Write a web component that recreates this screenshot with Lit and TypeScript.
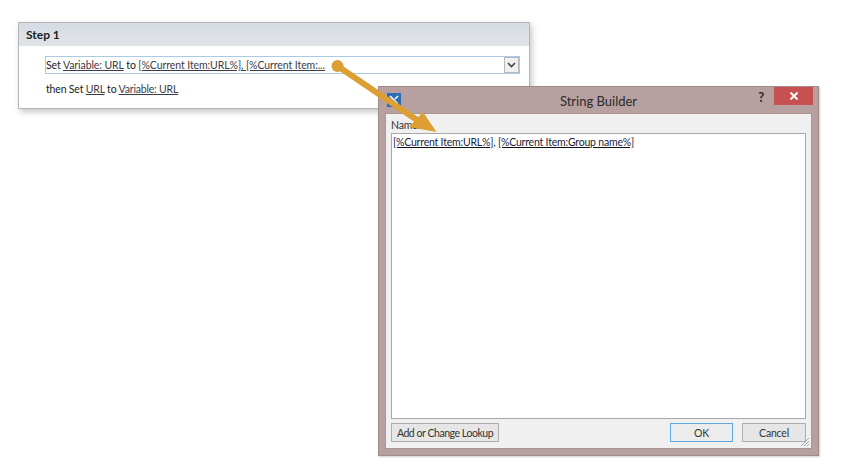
import { LitElement, html, css, svg } from "lit";
import { customElement } from "lit/decorators.js";

@customElement("app-root")
export class AppRoot extends LitElement {
  static styles = css`
    :host { display: block; position: relative; width: 848px; height: 473px; background: #fff; overflow: hidden;
      font-family: "Lato", "Noto Sans", sans-serif; font-size: 10.5px; letter-spacing: -0.2px; color: #222; }
    .stage { padding: 22px 0 0 18px; }
    .card { width: 512px; height: 87px; box-sizing: border-box; border: 1px solid #b4b4b4; background: #fff;
      box-shadow: 2px 3px 6px rgba(0,0,0,.22); display: flex; flex-direction: column; }
    .head { height: 23px; flex: none; box-sizing: border-box; padding: 5px 0 0 7px; background: linear-gradient(#d6dce3, #e0e4e9);
      font-weight: 700; font-size: 12px; letter-spacing: 0; color: #1c1c1c; line-height: 14px; }
    .body { padding: 10px 9px 0 26px; display: flex; flex-direction: column; gap: 8px; }
    .select { height: 18px; box-sizing: border-box; border: 1px solid #a9cbe4; display: flex; align-items: center; justify-content: space-between; padding-left: 0; line-height: 14px; white-space: nowrap; letter-spacing: -0.08px; }
    .chev { width: 15px; height: 16px; box-sizing: border-box; background: #f0f0f0; border: 1px solid #b8b8b8; display: flex; align-items: center; justify-content: center; }
    .line { padding-left: 1px; line-height: 14px; letter-spacing: -0.18px; }
    u { color: #3c3c46; text-underline-offset: 1px; }
    .dialog { position: absolute; left: 378px; top: 86px; width: 441px; height: 370px; box-sizing: border-box; background: #b7a09f;
      border: 1px solid #a08c8b; box-shadow: 1px 1px 2px rgba(0,0,0,.2); display: flex; flex-direction: column; padding: 0 6px 6px 6px; }
    .title { height: 26px; flex: none; display: flex; align-items: center; position: relative; }
    .app { width: 14px; height: 14px; background: #2a6fb5; margin: 0 0 0 2px; display: flex; align-items: center; justify-content: center; }
    .ttext { position: absolute; left: 0; right: 0; top: 6px; text-align: center; font-size: 13px; letter-spacing: 0; line-height: 16px; color: #2b2b2b; }
    .help { position: absolute; right: 48px; top: 2px; font-weight: 700; font-size: 13px; line-height: 16px; color: #2a2a2a; }
    .close { position: absolute; right: -1px; top: 0; width: 39px; height: 18px; background: #c75050; display: flex; align-items: center; justify-content: center; }
    .client { flex: 1; background: #f0f0f0; border: 1px solid #a89594; display: flex; flex-direction: column; padding: 5px 5px 6px 5px; position: relative; min-height: 0; }
    .name { line-height: 13px; height: 13px; color: #333; }
    .text { flex: 1; background: #fff; border: 1px solid #a8a8a8; margin-top: 1px; padding: 1px 1px 0; line-height: 14px; color: #1c1c3c; }
    .text u { color: #1c1c3c; text-decoration-color: #111; }
    .foot { margin-top: 4px; display: flex; height: 19px; }
    .foot .sp { flex: 1; }
    .btn { height: 19px; box-sizing: border-box; background: #e6e6e6; border: 1px solid #adadad; display: flex; align-items: center; justify-content: center; color: #333; line-height: 14px; white-space: nowrap; }
    .b1 { width: 108px; letter-spacing: -0.45px; }
    .b2 { width: 63px; border-color: #5fa8e6; margin-right: 9px; background: #ececec; }
    .b3 { width: 64px; }
    .grip { position: absolute; right: 1px; bottom: 1px; }
    .arrow { position: absolute; left: 0; top: 0; pointer-events: none; }
  `;

  render() {
    return html`
      <div class="stage">
        <div class="card">
          <div class="head">Step 1</div>
          <div class="body">
            <div class="select">
              <span>Set <u>Variable: URL</u> to <u>[%Current Item:URL%], [%Current Item:...</u></span>
              <span class="chev"><svg width="9" height="6" viewBox="0 0 9 6"><path d="M1 1l3.5 3.5L8 1" fill="none" stroke="#444" stroke-width="1.6"/></svg></span>
            </div>
            <div class="line">then Set <u>URL</u> to <u>Variable: URL</u></div>
          </div>
        </div>
      </div>
      <div class="dialog">
        <div class="title">
          <span class="app"><svg width="12" height="12" viewBox="0 0 12 12"><path d="M2 2l8 8M10 2L7 5M5 7l-3 3" fill="none" stroke="#fff" stroke-width="1.6"/></svg></span>
          <span class="ttext">String Builder</span>
          <span class="help">?</span>
          <span class="close"><svg width="10" height="8" viewBox="0 0 10 8"><path d="M1.5 .5l7 7M8.5 .5l-7 7" fill="none" stroke="#fff" stroke-width="2"/></svg></span>
        </div>
        <div class="client">
          <div class="name">Name:</div>
          <div class="text"><u>[%Current Item:URL%]</u>, <u>[%Current Item:Group name%]</u></div>
          <div class="foot">
            <div class="btn b1">Add or Change Lookup</div>
            <div class="sp"></div>
            <div class="btn b2">OK</div>
            <div class="btn b3">Cancel</div>
          </div>
          <svg class="grip" width="11" height="11" viewBox="0 0 11 11"><path d="M10 2L2 10M10 5L5 10M10 8L8 10" stroke="#a8a8a8" stroke-width="1"/></svg>
        </div>
      </div>
      <svg class="arrow" width="848" height="473" viewBox="0 0 848 473">
        ${svg`<circle cx="337.5" cy="66" r="6" fill="#dd9f33"/>
        <path d="M337.5 66L420 122" stroke="#dd9f33" stroke-width="6" fill="none"/>
        <path d="M423 112L436.5 132L409 127Z" fill="#dd9f33"/>`}
      </svg>
    `;
  }
}
